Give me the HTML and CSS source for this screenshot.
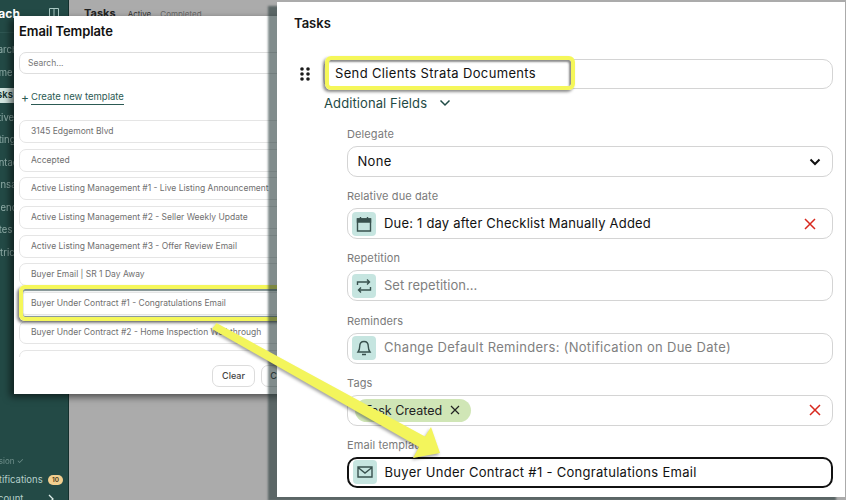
FILE: index.html
```html
<!DOCTYPE html>
<html lang="en">
<head>
<meta charset="utf-8">
<title>Email Template</title>
<link rel="stylesheet" href="styles.css">
</head>
<body>
<div class="stage">
  <div class="app">
    <aside class="sidebar">
      <div class="side-head">
        <span class="brand">Coach</span>
        <svg class="side-toggle" viewBox="0 0 10 10" width="10" height="10"><path d="M.5.5h9v9h-9zM5 .5v9" fill="none" stroke="#a9c9c3" stroke-width="1"/></svg>
      </div>
      <nav class="side-nav">
        <span class="nav-item">Search</span>
        <span class="nav-item">Home</span>
        <span class="nav-item nav-active">Tasks</span>
        <span class="nav-item">Active</span>
        <span class="nav-item">Listings</span>
        <span class="nav-item">Contacts</span>
        <span class="nav-item">Transactions</span>
        <span class="nav-item">Calendar</span>
        <span class="nav-item">Notes</span>
        <span class="nav-item">Metrics</span>
      </nav>
      <div class="side-foot">
        <span class="version">Version ✓</span>
        <div class="foot-row"><span>Notifications</span><span class="badge">10</span></div>
        <div class="foot-row"><span>Account</span><svg class="foot-chev" viewBox="0 0 6 10" width="6" height="10"><path d="M1 1l4 4-4 4" fill="none" stroke="#dfeeea" stroke-width="1.3"/></svg></div>
      </div>
    </aside>
    <main class="main">
      <span class="main-title">Tasks</span>
      <span class="main-tab">Active</span>
      <span class="main-tab main-tab-off">Completed</span>
    </main>
  </div>

  <section class="modal">
    <h2 class="modal-title">Email Template</h2>
    <div class="search">Search...</div>
    <div class="create"><span class="plus">+</span><span class="create-link">Create new template</span></div>
    <div class="list">
      <div class="row">3145 Edgemont Blvd</div>
      <div class="row">Accepted</div>
      <div class="row">Active Listing Management #1 - Live Listing Announcement</div>
      <div class="row">Active Listing Management #2 - Seller Weekly Update</div>
      <div class="row">Active Listing Management #3 - Offer Review Email</div>
      <div class="row">Buyer Email | SR 1 Day Away</div>
      <div class="row">Buyer Under Contract #1 - Congratulations Email</div>
      <div class="row">Buyer Under Contract #2 - Home Inspection Walkthrough</div>
      <div class="row">Buyer Under Contract #3 - Deposit</div>
    </div>
    <div class="modal-foot">
      <span class="btn">Clear</span>
      <span class="btn">Close</span>
    </div>
    <div class="mark mark-row"></div>
  </section>

  <section class="window">
    <h2 class="win-title">Tasks</h2>
    <div class="task-row">
      <svg class="drag" viewBox="0 0 10 14" width="10" height="14"><g fill="#1b1b1b"><circle cx="2" cy="2" r="1.8"/><circle cx="8" cy="2" r="1.8"/><circle cx="2" cy="7" r="1.8"/><circle cx="8" cy="7" r="1.8"/><circle cx="2" cy="12" r="1.8"/><circle cx="8" cy="12" r="1.8"/></g></svg>
      <div class="control task-input">Send Clients Strata Documents</div>
      <div class="mark mark-task"></div>
    </div>
    <div class="more">
      <span>Additional Fields</span>
      <svg viewBox="0 0 12 8" width="12" height="8"><path d="M1.5 1.5L6 6l4.500-4.500" fill="none" stroke="#1f4a45" stroke-width="1.500"/></svg>
    </div>
    <div class="fields">
      <div class="field">
        <label class="label">Delegate</label>
        <div class="control plain"><span class="value">None</span>
          <svg class="end" viewBox="0 0 12 8" width="12" height="8"><path d="M1.500 1.500L6 6l4.500-4.500" fill="none" stroke="#111" stroke-width="2"/></svg>
        </div>
      </div>
      <div class="field">
        <label class="label">Relative due date</label>
        <div class="control">
          <span class="tile"><svg viewBox="0 0 16 16" width="16" height="16"><path d="M1.500 3h13v12h-13z" fill="none" stroke="#38514e" stroke-width="1.400"/><path d="M1.500 3h13v3h-13zM4.500 1v3M11.500 1v3" fill="#38514e" stroke="#38514e" stroke-width="1.400"/></svg></span>
          <span class="value snug">Due: 1 day after Checklist Manually Added</span>
          <svg class="end clear-due" viewBox="0 0 12 12" width="12" height="12"><path d="M1 1l10 10M11 1L1 11" stroke="#d8281e" stroke-width="1.500"/></svg>
        </div>
      </div>
      <div class="field">
        <label class="label">Repetition</label>
        <div class="control">
          <span class="tile"><svg viewBox="0 0 16 16" width="16" height="16"><path d="M1.500 7V4h12M11 1.500L13.500 4 11 6.500M14.500 9v3h-12M5 9.500L2.500 12 5 14.500" fill="none" stroke="#38514e" stroke-width="1.400"/></svg></span>
          <span class="value muted tight">Set repetition...</span>
        </div>
      </div>
      <div class="field">
        <label class="label">Reminders</label>
        <div class="control">
          <span class="tile"><svg viewBox="0 0 16 16" width="16" height="16"><path d="M8 1.500c-3 0-4.300 2.300-4.300 5 0 2.700-.6 4-1.700 5.500h12c-1.100-1.500-1.700-2.800-1.700-5.500 0-2.700-1.300-5-4.300-5zM6 14.500h4" fill="none" stroke="#38514e" stroke-width="1.400"/></svg></span>
          <span class="value muted">Change Default Reminders: (Notification on Due Date)</span>
        </div>
      </div>
      <div class="field">
        <label class="label">Tags</label>
        <div class="control">
          <span class="chip">Task Created<svg viewBox="0 0 10 10" width="10" height="10"><path d="M1 1l8 8M9 1L1 9" stroke="#222" stroke-width="1.200"/></svg></span>
          <svg class="end" viewBox="0 0 12 12" width="12" height="12"><path d="M1 1l10 10M11 1L1 11" stroke="#d8281e" stroke-width="1.500"/></svg>
        </div>
      </div>
      <div class="field">
        <label class="label">Email template</label>
        <div class="control control-on">
          <span class="tile"><svg viewBox="0 0 16 16" width="16" height="16"><path d="M1 3h14v10H1zM1 3.500l7 5.500 7-5.500" fill="none" stroke="#38514e" stroke-width="1.400"/></svg></span>
          <span class="value">Buyer Under Contract #1 - Congratulations Email</span>
        </div>
      </div>
    </div>
  </section>

  <svg class="arrow" viewBox="0 0 846 500" width="846" height="500">
    <path d="M216.500 323L425 436.500 431 427 440 453 413 458 419 447 212 329z" fill="#f3f55c"/>
  </svg>
</div>
</body>
</html>
```
FILE: styles.css
```css
* { box-sizing: border-box; }
html, body { margin: 0; padding: 0; }
body { font-family: Inter, "Open Sans", sans-serif; background: #ababab; color: #111; }
h2 { margin: 0; }

.stage { position: relative; width: 846px; height: 500px; overflow: hidden; }
.app { display: flex; height: 500px; }

.sidebar { width: 69px; height: 500px; background: #234a46; border-right: 1px solid #14302d; display: flex; flex-direction: column; color: #b6d0cb; font-size: 9.500px; overflow: hidden; }
.side-head { height: 33px; flex: none; display: flex; align-items: center; justify-content: space-between; padding-right: 9px; padding-bottom: 6px; border-bottom: 1px solid #2f5753; }
.brand { margin-left: -18px; font-size: 12px; font-weight: 700; color: #fff; }
.side-nav { display: flex; flex-direction: column; gap: 8px; padding-top: 10px; }
.nav-item { height: 14.500px; line-height: 14.500px; margin-left: -14px; opacity: .75; white-space: nowrap; }
.nav-active { margin-left: 0; text-indent: -14px; opacity: 1; background: #d3e6e1; color: #14332f; font-weight: 600; overflow: hidden; }
.side-foot { margin-top: auto; display: flex; flex-direction: column; margin-left: -14px; margin-bottom: -8px; padding-right: 5px; }
.version { height: 16px; line-height: 14px; font-size: 8px; opacity: .5; }
.foot-row { display: flex; align-items: center; justify-content: space-between; height: 19px; font-size: 9.500px; white-space: nowrap; }
.badge { width: 15px; height: 10px; border-radius: 5px; background: #f2cf8f; color: #4a3a1a; font-size: 6.500px; font-weight: 600; line-height: 10px; text-align: center; }
.foot-chev { margin-right: 9px; }

.main { flex: 1; display: flex; align-items: baseline; gap: 9px; padding: 6px 0 0 15px; font-size: 8px; color: #333; }
.main-title { font-size: 11px; font-weight: 700; color: #222; margin-right: 3px; }
.main-tab-off { color: #666; }

.modal { position: absolute; left: 14px; top: 16px; width: 320px; height: 378px; background: #fff; padding: 0 5px; box-shadow: -4px 3px 7px rgba(0,0,0,.55); overflow: visible; }
.modal-title { font-size: 13px; font-weight: 600; line-height: 15px; margin-top: 8px; color: #111; letter-spacing: -.1px; }
.search { height: 22px; margin-top: 13px; border: 1px solid #dedede; border-radius: 7px; padding-left: 8px; font-size: 8.500px; line-height: 20px; color: #777; }
.create { display: flex; align-items: center; margin-top: 15px; height: 17px; padding-left: 2px; font-size: 9.500px; color: #2c5a54; }
.plus { width: 10px; font-size: 12px; line-height: 14px; }
.create-link { border-bottom: 1px solid #2c5a54; line-height: 14px; }
.list { display: flex; flex-direction: column; gap: 5.700px; margin-top: 14px; height: 237px; overflow: hidden; }
.row { flex: none; height: 23px; border: 1px solid #e5e5e5; border-radius: 7px; padding-left: 11px; font-size: 8.500px; line-height: 21px; color: #707070; white-space: nowrap; }
.modal-foot { display: flex; gap: 6px; padding: 8px 0 0 193px; }
.btn { width: 43px; height: 22px; flex: none; border: 1px solid #dcdcdc; border-radius: 7px; font-size: 9px; line-height: 20px; text-align: center; color: #444; font-weight: 500; }

.mark { position: absolute; border: 4px solid #f5f75a; border-radius: 6px; pointer-events: none; }
.mark-row { left: 5px; top: 269px; width: 300px; height: 36px; box-shadow: -2px 2px 3px rgba(0,0,0,.5), inset 0 2px 1px rgba(40,70,70,.6), inset 0 -1px 1px rgba(40,70,70,.6); }
.mark-task { left: 31px; top: 0; width: 250px; height: 34px; box-shadow: -2px 2px 3px rgba(0,0,0,.45), inset -2px 2px 2px rgba(0,0,0,.45); }

.window { position: absolute; left: 277px; top: 2px; width: 568px; height: 495px; background: #fff; padding: 0 12px 0 17px; box-shadow: -9px 4px 2px rgba(25,45,45,.55); }
.win-title { font-size: 13px; font-weight: 600; line-height: 16px; margin-top: 13px; color: #161616; }
.task-row { position: relative; display: flex; align-items: center; margin-top: 25px; padding-top: 3px; height: 33px; }
.drag { flex: none; margin-left: 6px; margin-right: 13px; }
.control { position: relative; display: flex; align-items: center; height: 31px; border: 1.500px solid #d4d4d4; border-radius: 10px; padding: 0 0 0 4px; font-size: 13px; font-weight: 400; letter-spacing: .3px; color: #111; }
.task-input { flex: 1; height: 30px; padding: 0 0 2px 11px; letter-spacing: .35px; }
.more { display: flex; align-items: center; gap: 12px; height: 20px; margin: 4px 0 0 30px; font-size: 13px; letter-spacing: .1px; color: #1f4a45; }
.fields { display: flex; flex-direction: column; gap: 9.200px; margin: 11px 0 0 53px; }
.field { flex: none; }
.label { display: block; height: 22px; line-height: 20px; font-size: 11px; letter-spacing: .1px; color: #7a7a7a; }
.plain { padding-left: 9.500px; }
.value { margin: 0 0 2px 8px; white-space: nowrap; }
.plain .value { margin-left: 0; }
.snug { letter-spacing: .2px; }
.muted { color: #7f7f7f; }
.tight { letter-spacing: 0; }
.tile { flex: none; display: flex; align-items: center; justify-content: center; width: 24px; height: 24px; border-radius: 4px; background: #c6e5e0; }
.end { position: absolute; right: 11px; top: 50%; transform: translateY(-50%); }
.clear-due { right: 16px; }
.chip { display: flex; align-items: center; gap: 8px; height: 23px; margin-left: 3px; padding: 0 11px 0 9px; border-radius: 12px; background: #d0e6b6; color: #222; font-size: 12.500px; letter-spacing: 0; }
.control-on { border: 2px solid #111; padding-left: 3.500px; }
.control-on .value { margin-bottom: 0; }

.arrow { position: absolute; left: 0; top: 0; pointer-events: none; filter: drop-shadow(-1px 2px 1.500px rgba(0,0,0,.35)); }
```
